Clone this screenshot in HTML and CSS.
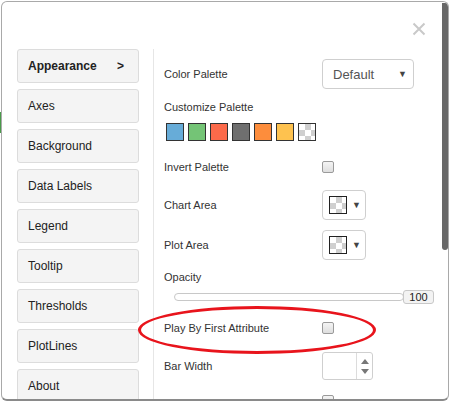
FILE: index.html
```html
<!DOCTYPE html>
<html>
<head>
<meta charset="utf-8">
<link rel="stylesheet" href="styles.css">
</head>
<body>
<div class="behind"></div>
<div class="dialog">
  <div class="header">
    <svg class="close" width="14" height="14" viewBox="0 0 14 14"><path d="M1.5 1.5 L12.5 12.5 M12.5 1.5 L1.5 12.5" stroke="#c9c9c9" stroke-width="2" fill="none"/></svg>
  </div>
  <div class="body">
    <div class="nav">
      <div class="navbtn active"><span>Appearance</span><span class="chev">&gt;</span></div>
      <div class="navbtn">Axes</div>
      <div class="navbtn">Background</div>
      <div class="navbtn">Data Labels</div>
      <div class="navbtn">Legend</div>
      <div class="navbtn">Tooltip</div>
      <div class="navbtn">Thresholds</div>
      <div class="navbtn">PlotLines</div>
      <div class="navbtn">About</div>
    </div>
    <div class="content">
      <div class="row r-palette">
        <div class="label">Color Palette</div>
        <div class="select"><span>Default</span><span class="arrow">▼</span></div>
      </div>
      <div class="label solo r-custom">Customize Palette</div>
      <div class="swatches">
        <span class="sw" style="background:#67acd8"></span>
        <span class="sw" style="background:#74c476"></span>
        <span class="sw" style="background:#fc6a4a"></span>
        <span class="sw" style="background:#6f6f6f"></span>
        <span class="sw" style="background:#fd8d3c"></span>
        <span class="sw" style="background:#fec24f"></span>
        <span class="sw checker"></span>
      </div>
      <div class="row r-invert">
        <div class="label">Invert Palette</div>
        <div class="check"></div>
      </div>
      <div class="row r-chart">
        <div class="label">Chart Area</div>
        <div class="picker"><span class="pick-sw checker"></span><span class="arrow">▼</span></div>
      </div>
      <div class="row r-plot">
        <div class="label">Plot Area</div>
        <div class="picker"><span class="pick-sw checker"></span><span class="arrow">▼</span></div>
      </div>
      <div class="label solo r-opacity">Opacity</div>
      <div class="slider-row">
        <div class="track"></div>
        <div class="valbox">100</div>
      </div>
      <div class="row r-play">
        <div class="label">Play By First Attribute</div>
        <div class="check"></div>
      </div>
      <div class="row r-bar">
        <div class="label">Bar Width</div>
        <div class="spinner">
          <div class="spin-field"></div>
          <div class="spin-btns"><span class="up"></span><span class="down"></span></div>
        </div>
      </div>
      <div class="row r-next">
        <div class="label"></div>
        <div class="check small"></div>
      </div>
    </div>
  </div>
  <div class="scrollbar"></div>
  <div class="ellipse"></div>
</div>
</body>
</html>
```
FILE: styles.css
```css
html, body {
  margin: 0;
  padding: 0;
  background: #ffffff;
}
body {
  font-family: "Liberation Sans", Arial, sans-serif;
  font-size: 11px;
  color: #333;
  width: 450px;
  height: 402px;
  overflow: hidden;
  position: relative;
}
.behind {
  position: absolute;
  left: 0;
  top: 112px;
  width: 2px;
  height: 21px;
  background: #4a9a4a;
}
.dialog {
  position: relative;
  margin: 1px 0 0 1px;
  width: 446px;
  height: 397px;
  border: 1px solid #a9a9a9;
  border-bottom: 2px solid #8a8a8a;
  border-radius: 6px;
  background: #fff;
  overflow: hidden;
}
.header {
  height: 47px;
  display: flex;
  justify-content: flex-end;
  align-items: flex-start;
}
.close {
  margin: 20px 22px 0 0;
}
.body {
  display: flex;
  height: 350px;
}
.nav {
  width: 122px;
  padding-left: 15px;
  display: flex;
  flex-direction: column;
  gap: 6px;
  border-right: 1px solid #e6e6e6;
  padding-right: 14px;
}
.navbtn {
  flex: none;
  height: 32px;
  border: 1px solid #dcdcdc;
  border-radius: 3px;
  background: #f4f4f4;
  display: flex;
  align-items: center;
  justify-content: space-between;
  padding: 0 14px 0 10px;
  font-size: 12px;
  color: #222;
}
.navbtn.active {
  font-weight: bold;
}
.chev {
  font-weight: bold;
}
.content {
  flex: 1;
  padding-left: 10px;
  padding-top: 10px;
  display: flex;
  flex-direction: column;
}
.row {
  display: flex;
  align-items: center;
  flex: none;
}
.row .label {
  width: 158px;
}
.label {
  color: #333;
  line-height: 14px;
}
.solo {
  flex: none;
}
.r-palette { height: 30px; }
.select {
  width: 90px;
  height: 28px;
  border: 1px solid #cfcfcf;
  border-radius: 4px;
  display: flex;
  align-items: center;
  justify-content: space-between;
  padding: 0 6px 0 10px;
  box-sizing: border-box;
  width: 92px;
  height: 30px;
  font-size: 13px;
  color: #555;
}
.arrow {
  font-size: 9px;
  color: #444;
}
.r-custom { margin-top: 11px; }
.swatches {
  display: flex;
  gap: 4px;
  margin-top: 9px;
  margin-left: 2px;
  flex: none;
}
.sw {
  width: 16px;
  height: 16px;
  border: 1px solid #333;
  display: block;
}
.checker {
  background-color: #fff;
  background-image:
    linear-gradient(45deg, #cfcfcf 25%, transparent 25%, transparent 75%, #cfcfcf 75%),
    linear-gradient(45deg, #cfcfcf 25%, transparent 25%, transparent 75%, #cfcfcf 75%);
  background-size: 12px 12px;
  background-position: 0 0, 6px 6px;
}
.r-invert { height: 20px; margin-top: 16px; }
.check {
  width: 11px;
  height: 11px;
  border: 1px solid #9a9a9a;
  border-radius: 2px;
  background: linear-gradient(#f4f4f4, #dedede);
  box-sizing: border-box;
  width: 12px;
  height: 12px;
}
.r-chart { margin-top: 13px; height: 30px; }
.r-plot { margin-top: 10px; height: 30px; }
.picker {
  width: 44px;
  height: 30px;
  box-sizing: border-box;
  border: 1px solid #cfcfcf;
  border-radius: 4px;
  display: flex;
  align-items: center;
  padding-left: 6px;
  gap: 5px;
}
.pick-sw {
  display: block;
  width: 18px;
  height: 18px;
  border: 1px solid #222;
  box-sizing: border-box;
}
.r-opacity { margin-top: 10px; }
.slider-row {
  flex: none;
  display: flex;
  align-items: center;
  margin-top: 6px;
  height: 14px;
  padding-left: 10px;
}
.track {
  width: 228px;
  height: 6px;
  border: 1px solid #c8c8c8;
  border-radius: 4px;
  background: #fff;
}
.valbox {
  width: 31px;
  height: 14px;
  box-sizing: border-box;
  border: 1px solid #c8c8c8;
  border-radius: 3px;
  background: #f3f3f3;
  font-size: 11px;
  line-height: 12px;
  text-align: center;
  color: #222;
  margin-left: -1px;
}
.r-play { margin-top: 14px; height: 20px; }
.r-bar { margin-top: 14px; height: 28px; }
.spinner {
  width: 51px;
  height: 28px;
  box-sizing: border-box;
  border: 1px solid #cfcfcf;
  border-radius: 3px;
  display: flex;
}
.spin-field { flex: 1; }
.spin-btns {
  width: 15px;
  border-left: 1px solid #dcdcdc;
  display: flex;
  flex-direction: column;
  align-items: center;
  justify-content: space-around;
  padding: 3px 0;
}
.up, .down {
  width: 0;
  height: 0;
  border-left: 4px solid transparent;
  border-right: 4px solid transparent;
}
.up { border-bottom: 5px solid #777; }
.down { border-top: 5px solid #777; }
.r-next { margin-top: 15px; height: 12px; align-items: flex-start; }
.scrollbar {
  position: absolute;
  right: 0;
  top: 1px;
  width: 6px;
  height: 247px;
  background: #686868;
  border-radius: 0 3px 3px 3px;
}
.ellipse {
  position: absolute;
  left: 136px;
  top: 304px;
  width: 232px;
  height: 42px;
  border: 3px solid #e8141c;
  border-radius: 50%;
}
```
